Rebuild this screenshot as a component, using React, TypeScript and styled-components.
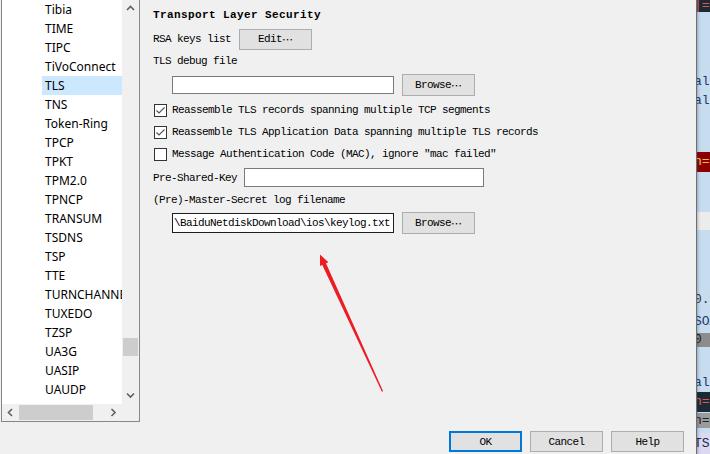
import React from "react";
import styled, { createGlobalStyle } from "styled-components";

const MONO = `"Liberation Mono", "DejaVu Sans Mono", monospace`;

const Global = createGlobalStyle`
  html, body { margin: 0; padding: 0; background: #f0f0f0; overflow: hidden; }
  #root { width: 710px; height: 454px; }
`;

const Screen = styled.div`
  position: relative;
  width: 710px;
  height: 454px;
  display: flex;
  overflow: hidden;
  background: #f0f0f0;
`;

const Dialog = styled.div`
  width: 696px;
  height: 454px;
  display: flex;
  flex-direction: column;
  background: #f0f0f0;
`;

const Main = styled.div`
  display: flex;
  height: 422px;
`;

/* ---------- protocol list ---------- */
const ListBox = styled.div`
  margin-left: 1px;
  width: 139px;
  height: 422px;
  box-sizing: border-box;
  border: 1px solid #828790;
  border-top: none;
  display: grid;
  grid-template-columns: 120px 17px;
  grid-template-rows: 404px 17px;
  background: #fff;
`;

const Rows = styled.div`
  overflow: hidden;
  display: flex;
  flex-direction: column;
`;

const Item = styled.div<{ $selected?: boolean }>`
  flex-shrink: 0;
  height: 19px;
  margin-left: 40px;
  padding-left: 3px;
  display: flex;
  align-items: center;
  font-family: "Noto Sans", "Open Sans", sans-serif;
  font-size: 12px;
  color: #000;
  white-space: nowrap;
  overflow: hidden;
  background: ${(p) => (p.$selected ? "#cce8ff" : "transparent")};
`;

const VScroll = styled.div`
  background: #f0f0f0;
  display: flex;
  flex-direction: column;
`;

const HScroll = styled.div`
  background: #f0f0f0;
  display: flex;
`;

const Corner = styled.div`
  background: #f0f0f0;
`;

const ArrowBtn = styled.div`
  flex: 0 0 17px;
  display: flex;
  align-items: center;
  justify-content: center;
`;

const VTrack = styled.div<{ $offset: number }>`
  flex: 1;
  padding-top: ${(p) => p.$offset}px;
  display: flex;
  flex-direction: column;
`;

const VThumb = styled.div`
  height: 18px;
  margin: 0 1px 0 1px;
  background: #cdcdcd;
`;

const HTrack = styled.div<{ $offset: number }>`
  flex: 1;
  padding-left: ${(p) => p.$offset}px;
  display: flex;
`;

const HThumb = styled.div`
  width: 74px;
  margin: 1px 0;
  background: #cdcdcd;
`;

const Chevron = ({ dir }: { dir: "up" | "down" | "left" | "right" }) => {
  const d = {
    up: "M1 5 L4.5 1.5 L8 5",
    down: "M1 1.5 L4.5 5 L8 1.5",
    left: "M5 1 L1.5 4.5 L5 8",
    right: "M1.5 1 L5 4.5 L1.5 8",
  }[dir];
  const vertical = dir === "up" || dir === "down";
  return (
    <svg width={vertical ? 9 : 7} height={vertical ? 7 : 9} viewBox={vertical ? "0 0 9 7" : "0 0 7 9"}>
      <path d={d} fill="none" stroke="#606060" strokeWidth="1.6" />
    </svg>
  );
};

/* ---------- settings ---------- */
const Settings = styled.div`
  flex: 1;
  padding-left: 13px;
  display: flex;
  flex-direction: column;
  font-family: ${MONO};
  font-size: 11px;
  letter-spacing: -0.6px;
  color: #000;
`;

const Title = styled.div`
  height: 29px;
  display: flex;
  align-items: center;
  font-weight: bold;
  letter-spacing: 0.4px;
`;

const Row = styled.div<{ $h: number; $indent?: number; $gap?: number; $top?: number }>`
  height: ${(p) => p.$h}px;
  margin-top: ${(p) => p.$top ?? 0}px;
  padding-left: ${(p) => p.$indent ?? 0}px;
  display: flex;
  align-items: center;
  gap: ${(p) => p.$gap ?? 0}px;
  white-space: nowrap;
`;

const Button = styled.div<{ $h?: number; $focus?: boolean }>`
  box-sizing: border-box;
  width: 73px;
  height: ${(p) => p.$h ?? 21}px;
  display: flex;
  align-items: center;
  justify-content: center;
  background: #e1e1e1;
  border: ${(p) => (p.$focus ? "2px solid #0078d7" : "1px solid #adadad")};
  font-family: ${MONO};
  font-size: 11px;
  letter-spacing: -0.6px;
  color: #000;
  white-space: nowrap;
`;

const Dots = styled.span`
  font-family: "Noto Sans CJK SC", sans-serif;
  letter-spacing: 0;
  font-size: 11px;
`;

const TextBox = styled.div<{ $w: number; $h: number; $dark?: boolean }>`
  box-sizing: border-box;
  width: ${(p) => p.$w}px;
  height: ${(p) => p.$h}px;
  background: #fff;
  border: 1px solid ${(p) => (p.$dark ? "#1e1e1e" : "#7a7a7a")};
  display: flex;
  align-items: center;
  padding-left: 1px;
  overflow: hidden;
  white-space: nowrap;
`;

const Box = styled.div`
  box-sizing: border-box;
  width: 13px;
  height: 13px;
  margin-left: 1px;
  border: 1px solid #333;
  background: #fff;
  display: flex;
  align-items: center;
  justify-content: center;
`;

const CheckLabel = styled.span`
  margin-left: 5px;
`;

const Check = ({ checked, label }: { checked: boolean; label: string }) => (
  <Row $h={22}>
    <Box>
      {checked && (
        <svg width="11" height="11" viewBox="0 0 11 11">
          <path d="M1.5 5.5 L4 8 L9.5 2.5" fill="none" stroke="#555" strokeWidth="1.2" />
        </svg>
      )}
    </Box>
    <CheckLabel>{label}</CheckLabel>
  </Row>
);

/* ---------- footer ---------- */
const Footer = styled.div`
  flex: 1;
  display: flex;
  justify-content: flex-end;
  align-items: flex-start;
  gap: 8px;
  padding: 9px 12px 0 0;
`;

/* ---------- window behind ---------- */
const Edge = styled.div`
  width: 1px;
  background: #6e6e6e;
`;

const Behind = styled.div`
  width: 13px;
  display: flex;
  flex-direction: column;
  overflow: hidden;
`;

const Band = styled.div<{ $h: number; $bg: string; $fg: string }>`
  flex-shrink: 0;
  height: ${(p) => p.$h}px;
  line-height: ${(p) => p.$h}px;
  background: ${(p) => p.$bg};
  color: ${(p) => p.$fg};
  font-family: ${MONO};
  font-size: 13px;
  white-space: nowrap;
  text-indent: -3px;
  box-shadow: inset 4px 0 3px -3px rgba(40, 60, 90, 0.35);
  overflow: hidden;
`;

const Overlay = styled.svg`
  position: absolute;
  left: 0;
  top: 0;
  pointer-events: none;
`;

const BLUE = "#c7dcee";
const DARK = "#1b2b35";

const bands: { h: number; bg: string; fg: string; t?: string }[] = [
  { h: 12, bg: DARK, fg: "#e4574c", t: "|=" },
  { h: 62, bg: BLUE, fg: "#1b3a70" },
  { h: 15, bg: BLUE, fg: "#1b3a70", t: "al" },
  { h: 4, bg: BLUE, fg: "#1b3a70" },
  { h: 15, bg: BLUE, fg: "#1b3a70", t: "al" },
  { h: 44, bg: BLUE, fg: "#1b3a70" },
  { h: 20, bg: "#8e0000", fg: "#f0c24a", t: "n=" },
  { h: 40, bg: BLUE, fg: "#1b3a70" },
  { h: 18, bg: "#ececec", fg: "#333" },
  { h: 62, bg: BLUE, fg: "#1b3a70" },
  { h: 16, bg: BLUE, fg: "#333", t: "0.:" },
  { h: 6, bg: BLUE, fg: "#333" },
  { h: 15, bg: BLUE, fg: "#1b3a70", t: "SOA" },
  { h: 4, bg: BLUE, fg: "#333" },
  { h: 14, bg: "#8c8c8c", fg: "#222", t: "0 I" },
  { h: 28, bg: BLUE, fg: "#333" },
  { h: 15, bg: BLUE, fg: "#1b3a70", t: "al" },
  { h: 2, bg: BLUE, fg: "#333" },
  { h: 20, bg: DARK, fg: "#e4574c", t: "n=" },
  { h: 1, bg: BLUE, fg: "#333" },
  { h: 15, bg: "#9b9b9b", fg: "#222", t: "n=" },
  { h: 5, bg: BLUE, fg: "#333" },
  { h: 22, bg: "#dcd8f2", fg: "#1c2a40", t: "TS▾" },
];

const protocols = [
  "Tibia", "TIME", "TIPC", "TiVoConnect", "TLS", "TNS", "Token-Ring", "TPCP",
  "TPKT", "TPM2.0", "TPNCP", "TRANSUM", "TSDNS", "TSP", "TTE", "TURNCHANNEL",
  "TUXEDO", "TZSP", "UA3G", "UASIP", "UAUDP", "UBDP",
];

export default function App() {
  return (
    <>
      <Global />
      <Screen>
        <Dialog>
          <Main>
            <ListBox>
              <Rows>
                {protocols.map((p) => (
                  <Item key={p} $selected={p === "TLS"}>{p}</Item>
                ))}
              </Rows>
              <VScroll>
                <ArrowBtn><Chevron dir="up" /></ArrowBtn>
                <VTrack $offset={321}><VThumb /></VTrack>
                <ArrowBtn><Chevron dir="down" /></ArrowBtn>
              </VScroll>
              <HScroll>
                <ArrowBtn><Chevron dir="left" /></ArrowBtn>
                <HTrack $offset={0}><HThumb /></HTrack>
                <ArrowBtn><Chevron dir="right" /></ArrowBtn>
              </HScroll>
              <Corner />
            </ListBox>
            <Settings>
              <Title>Transport Layer Security</Title>
              <Row $h={20} $gap={8}>
                <span>RSA keys list</span>
                <Button>Edit<Dots>…</Dots></Button>
              </Row>
              <Row $h={24}>TLS debug file</Row>
              <Row $h={23} $indent={19} $gap={8}>
                <TextBox $w={222} $h={18} />
                <Button $h={22}>Browse<Dots>…</Dots></Button>
              </Row>
              <Row $h={0} $top={3} />
              <Check checked label="Reassemble TLS records spanning multiple TCP segments" />
              <Check checked label="Reassemble TLS Application Data spanning multiple TLS records" />
              <Check checked={false} label={'Message Authentication Code (MAC), ignore "mac failed"'} />
              <Row $h={21} $top={2} $gap={7}>
                <span>Pre-Shared-Key</span>
                <TextBox $w={240} $h={19} />
              </Row>
              <Row $h={23}>(Pre)-Master-Secret log filename</Row>
              <Row $h={24} $indent={19} $gap={8}>
                <TextBox $w={222} $h={20} $dark>\BaiduNetdiskDownload\ios\keylog.txt</TextBox>
                <Button $h={22}>Browse<Dots>…</Dots></Button>
              </Row>
            </Settings>
          </Main>
          <Footer>
            <Button $focus>OK</Button>
            <Button>Cancel</Button>
            <Button>Help</Button>
          </Footer>
        </Dialog>
        <Edge />
        <Behind>
          {bands.map((b, i) => (
            <Band key={i} $h={b.h} $bg={b.bg} $fg={b.fg}>{b.t ?? ""}</Band>
          ))}
        </Behind>
        <Overlay width="710" height="454" viewBox="0 0 710 454">
          <polygon
            points="383.1,391.2 326,263.3 328.4,262.2 320,254.5 320,266 322.3,264.9 381.9,391.8"
            fill="#ec1c24"
          />
        </Overlay>
      </Screen>
    </>
  );
}
